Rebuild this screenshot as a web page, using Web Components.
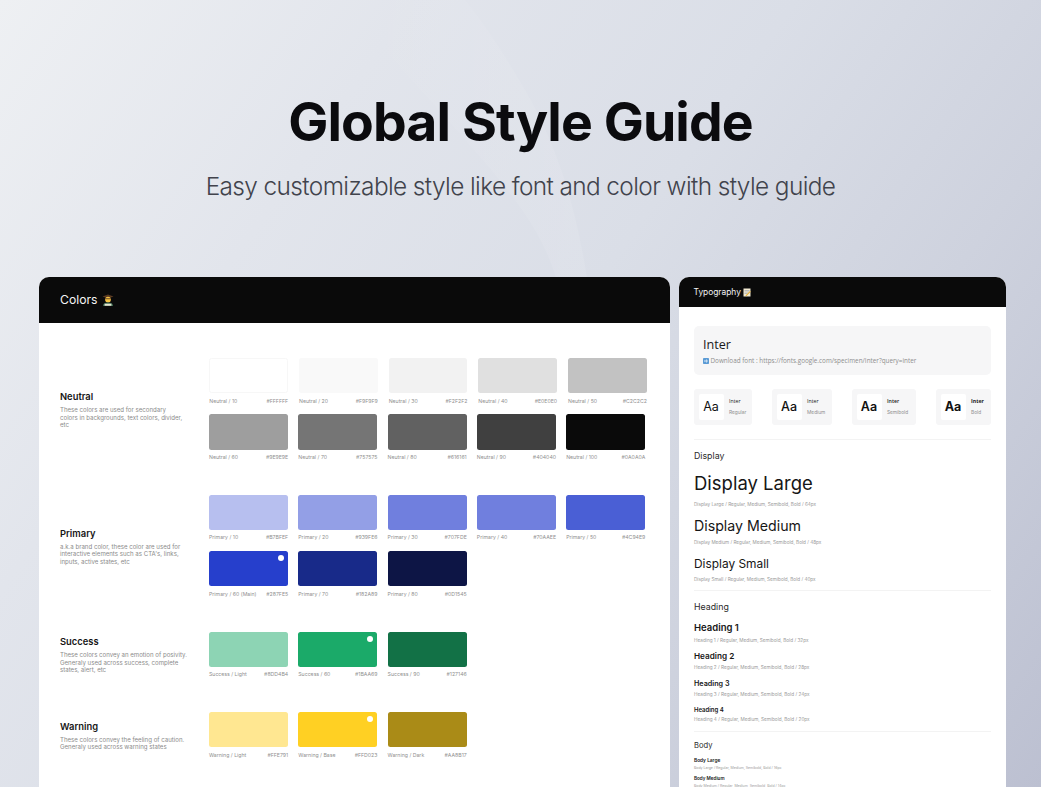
<!DOCTYPE html>
<html lang="en">
<head>
<meta charset="utf-8">
<title>Global Style Guide</title>
<style>
html,body{margin:0;padding:0;height:100%;overflow:hidden}
body{font-family:Inter,"Liberation Sans",sans-serif}
</style>
</head>
<body>
<template id="t-page">
<style>
:host{display:block;position:relative;width:1041px;height:787px;overflow:hidden;
background:linear-gradient(125deg,#eef0f3 0%,#e2e5ec 26%,#dadee7 50%,#ced2de 72%,#bcc0d1 100%)}
svg.bg{position:absolute;inset:0;width:100%;height:100%;pointer-events:none}
.wrap{position:relative;display:flex;flex-direction:column}
.cards{display:flex;gap:9px;padding-left:39px;align-items:flex-start}
</style>
<svg class="bg" viewBox="0 0 1041 787" aria-hidden="true">
<defs><linearGradient id="sw" x1="0" y1="0" x2="1" y2="0"><stop offset="0" stop-color="#fff" stop-opacity="0"/><stop offset="1" stop-color="#fff" stop-opacity=".09"/></linearGradient></defs>
<path d="M340 0C400 70 470 140 515 200C545 240 555 270 562 300L590 300C580 220 560 150 525 90C505 55 485 25 465 0Z" fill="url(#sw)"/>
</svg>
<div class="wrap"><slot name="hero"></slot><div class="cards"><slot></slot></div></div>
</template>

<template id="t-hero">
<style>
:host{display:block;height:277px;box-sizing:border-box;padding-top:90px;text-align:center;font-family:Inter,sans-serif}
h1{margin:0;font-size:53.5px;line-height:64px;font-weight:700;letter-spacing:-.9px;color:#0b0b0e}
p{margin:17px 0 0;font-size:24.4px;line-height:30px;font-weight:300;letter-spacing:-.6px;color:#41434c}
</style>
<h1><slot name="title"></slot></h1><p><slot name="sub"></slot></p>
</template>

<template id="t-card">
<style>
:host{display:block;width:var(--w);height:530px;background:#fff;border-radius:10px 10px 0 0;overflow:hidden;flex:none}
header{display:flex;align-items:center;gap:var(--hgap,3px);height:var(--hh);box-sizing:border-box;padding-left:var(--hp);padding-bottom:var(--hb,0);background:#0a0a0a;color:#f5f5f5;font-size:var(--hf);font-weight:400}
</style>
<header><slot name="head"></slot></header><slot></slot>
</template>

<template id="t-group">
<style>
:host{display:grid;grid-template-columns:149px 1fr;margin-bottom:24.3px;font-family:Inter,sans-serif}
.txt{align-self:center;padding-bottom:9px}
h3{margin:0 0 3px;font-size:9.4px;line-height:12px;font-weight:600;color:#161616}
p{margin:0;font-size:6.1px;line-height:7.5px;color:#8b8b8b;white-space:pre-line}
.rows{display:flex;flex-direction:column}
</style>
<div class="txt"><h3><slot name="title"></slot></h3><p><slot name="desc"></slot></p></div>
<div class="rows"><slot></slot></div>
</template>

<template id="t-row">
<style>:host{display:flex;gap:var(--g,10.1px);margin-left:var(--ml,0);height:56.2px}</style><slot></slot>
</template>

<template id="t-swatch">
<style>
:host{display:block;width:var(--sw,79.2px);flex:none;font-family:Inter,sans-serif}
.box{position:relative;height:35.2px;border-radius:2.5px;box-sizing:border-box}
.dot{position:absolute;top:4px;right:4.5px;width:6px;height:6px;border-radius:50%;background:#fff;display:none}
:host([main]) .dot{display:block}
.cap{display:flex;justify-content:space-between;margin-top:4.3px;font-size:5.2px;line-height:7px;color:#8f8f8f;white-space:nowrap}
</style>
<div class="box"><span class="dot"></span></div>
<div class="cap"><span class="n"></span><span class="h"></span></div>
</template>

<template id="t-weight">
<style>
:host{display:flex;align-items:center;height:36px;box-sizing:border-box;padding-left:4.5px;width:var(--w);background:#f6f6f7;border-radius:3px;font-family:Inter,sans-serif;flex:none}
.aa{display:flex;align-items:center;justify-content:center;width:25px;height:26px;background:#fff;border-radius:2px;font-size:12.5px;color:#111;font-weight:var(--fw)}
.t{margin-left:5.5px;display:flex;flex-direction:column;gap:5.4px}
b{font-size:5.2px;line-height:6px;font-weight:var(--fw);color:#222;font-family:"Open Sans",Inter,sans-serif}
i{font-style:normal;font-size:4.8px;line-height:5px;color:#8f8f8f}
</style>
<div class="aa">Aa</div><div class="t"><b>Inter</b><i class="s"></i></div>
</template>

<template id="t-spec">
<style>
:host{display:block;margin-top:var(--mt,0);font-family:Inter,sans-serif}
div{font-size:var(--fs);line-height:var(--lh);font-weight:var(--fw,400);color:#161616;white-space:nowrap}
p{margin:var(--sg,0) 0 0;font-size:var(--ss,4.66px);line-height:6px;color:#9a9a9a;white-space:nowrap}
</style>
<div><slot name="name"></slot></div><p><slot name="meta"></slot></p>
</template>

<template id="t-label">
<style>:host{display:block;font-family:Inter,sans-serif;font-size:var(--ls,8.8px);line-height:12px;color:#2a2a2a;margin-top:var(--mt,0)}</style><slot></slot>
</template>

<template id="t-rule">
<style>:host{display:block;height:1px;background:#f3f3f3;margin-top:var(--mt,0)}</style>
</template>

<template id="t-font">
<style>
:host{display:block;height:49px;box-sizing:border-box;margin-top:18.5px;padding:11px 9px;background:#f6f6f7;border-radius:5px}
h2{margin:0;font:500 12.6px/16px "Open Sans",Inter,sans-serif;color:#1a1a1a}
p{display:flex;align-items:center;gap:1.5px;margin:3.5px 0 0;font:400 6.35px/9px "Open Sans",Inter,sans-serif;color:#8e8e8e;white-space:nowrap}
</style>
<h2><slot name="name"></slot></h2><p><slot name="link"></slot></p>
</template>

<style>
style-card{font-family:Inter,sans-serif}
</style>

<style-page>
  <style-hero slot="hero">
    <span slot="title">Global Style Guide</span>
    <span slot="sub">Easy customizable style like font and color with style guide</span>
  </style-hero>

  <style-card style="--w:631px;--hh:46px;--hp:21px;--hf:12.2px;--hgap:3px;--hb:1px">
    <span slot="head">Colors</span>
    <svg slot="head" width="14" height="14" viewBox="0 0 14 14" aria-hidden="true"><path d="M1.5 3.6 7 1.6l5.5 2L7 5.6z" fill="#5a3a22"/><circle cx="7" cy="6.6" r="2.9" fill="#f6c343"/><path d="M4 5.3h6v1H4z" fill="#6d4a26"/><path d="M2 13c0-2.5 2-3.4 5-3.4s5 .9 5 3.4z" fill="#3d6b52"/><path d="M3.6 10.8h6.8v2H3.6z" fill="#e8e4d2"/></svg>
    <div id="colors" style="box-sizing:border-box;padding:35.2px 0 0 21px"></div>
  </style-card>

  <style-card style="--w:327px;--hh:30px;--hp:14.5px;--hf:8.4px;--hgap:2px">
    <span slot="head">Typography</span>
    <svg slot="head" width="8" height="9" viewBox="0 0 8 9" aria-hidden="true"><rect x=".5" y=".5" width="7" height="8" fill="#f2ead2"/><path d="M1.5 2.5h5M1.5 4h5M1.5 5.5h3" stroke="#9aa0a8" stroke-width=".6"/><path d="M2.5 7.5 7 3l.8.8L3.3 8.3z" fill="#e8b33c"/></svg>
    <div style="padding:0 15px">
      <style-font>
        <span slot="name">Inter</span>
        <svg slot="link" width="6" height="6" viewBox="0 0 6 6" aria-hidden="true"><rect width="6" height="6" rx=".8" fill="#5b9bd5"/><path d="M1 3h3M3 1.6 4.5 3 3 4.4" stroke="#fff" stroke-width=".8" fill="none"/></svg>
        <span slot="link">Download font : https://fonts.google.com/specimen/Inter?query=inter</span>
      </style-font>
      <div style="display:flex;justify-content:space-between;margin-top:14px">
        <style-weight label="Regular" style="--w:58px;--fw:400"></style-weight>
        <style-weight label="Medium" style="--w:60px;--fw:500"></style-weight>
        <style-weight label="Semibold" style="--w:64px;--fw:600"></style-weight>
        <style-weight label="Bold" style="--w:55px;--fw:700"></style-weight>
      </div>
      <style-rule style="--mt:14.5px"></style-rule>

      <style-label style="--mt:9.5px">Display</style-label>
      <style-spec style="--mt:9.5px;--fs:18.5px;--lh:24px;--sg:6px;--fw:400"><span slot="name">Display Large</span><span slot="meta">Display Large / Regular, Medium, Semibold, Bold / 64px</span></style-spec>
      <style-spec style="--mt:9px;--fs:14.2px;--lh:20px;--sg:3px;--fw:400"><span slot="name">Display Medium</span><span slot="meta">Display Medium / Regular, Medium, Semibold, Bold / 48px</span></style-spec>
      <style-spec style="--mt:11px;--fs:11.9px;--lh:16px;--sg:3.5px;--fw:400"><span slot="name">Display Small</span><span slot="meta">Display Small / Regular, Medium, Semibold, Bold / 40px</span></style-spec>
      <style-rule style="--mt:8px"></style-rule>

      <style-label style="--mt:10.5px">Heading</style-label>
      <style-spec style="--mt:9px;--fs:9.5px;--lh:12px;--sg:3px;--fw:600;--ss:4.7px"><span slot="name">Heading 1</span><span slot="meta">Heading 1 / Regular, Medium, Semibold, Bold / 32px</span></style-spec>
      <style-spec style="--mt:7.5px;--fs:8.2px;--lh:11px;--sg:2.5px;--fw:600;--ss:4.7px"><span slot="name">Heading 2</span><span slot="meta">Heading 2 / Regular, Medium, Semibold, Bold / 28px</span></style-spec>
      <style-spec style="--mt:9px;--fs:7.2px;--lh:10px;--sg:2px;--fw:600;--ss:4.7px"><span slot="name">Heading 3</span><span slot="meta">Heading 3 / Regular, Medium, Semibold, Bold / 24px</span></style-spec>
      <style-spec style="--mt:7.5px;--fs:6px;--lh:9px;--sg:2px;--fw:600;--ss:4.7px"><span slot="name">Heading 4</span><span slot="meta">Heading 4 / Regular, Medium, Semibold, Bold / 20px</span></style-spec>
      <style-rule style="--mt:9.5px"></style-rule>

      <style-label style="--mt:8px;--ls:7.6px">Body</style-label>
      <style-spec style="--mt:5px;--fs:4.8px;--lh:6px;--sg:2px;--fw:600;--ss:3.5px"><span slot="name">Body Large</span><span slot="meta">Body Large / Regular, Medium, Semibold, Bold / 16px</span></style-spec>
      <style-spec style="--mt:4.5px;--fs:4.6px;--lh:6px;--sg:1.5px;--fw:600;--ss:3.5px"><span slot="name">Body Medium</span><span slot="meta">Body Medium / Regular, Medium, Semibold, Bold / 14px</span></style-spec>
    </div>
  </style-card>
</style-page>

<script>
function simple(tag,tpl,extra){
  customElements.define(tag,class extends HTMLElement{
    constructor(){super();this.attachShadow({mode:'open'}).appendChild(document.getElementById(tpl).content.cloneNode(true));}
    connectedCallback(){if(extra)extra(this);}
  });
}
simple('style-page','t-page');
simple('style-hero','t-hero');
simple('style-card','t-card');
simple('color-group','t-group');
simple('color-row','t-row');
simple('style-label','t-label');
simple('style-rule','t-rule');
simple('style-font','t-font');
simple('style-spec','t-spec');
simple('style-weight','t-weight',el=>{el.shadowRoot.querySelector('.s').textContent=el.getAttribute('label');});
simple('color-swatch','t-swatch',el=>{
  const s=el.shadowRoot;
  const box=s.querySelector('.box');
  box.style.background=el.getAttribute('fill');
  if(el.hasAttribute('outlined'))box.style.border='1px solid #f7f7f7';
  s.querySelector('.n').textContent=el.getAttribute('name');
  s.querySelector('.h').textContent=el.getAttribute('hex');
});
const data=[
 ['Neutral','These colors are used for secondary\ncolors in backgrounds, text colors, divider,\netc',[
  [['Neutral / 10','#FFFFFF','#FFFFFF',0,1],['Neutral / 20','#F9F9F9','#F9F9F9'],['Neutral / 30','#F2F2F2','#F2F2F2'],['Neutral / 40','#E0E0E0','#E0E0E0'],['Neutral / 50','#C2C2C2','#C2C2C2']],
  [['Neutral / 60','#9E9E9E','#9E9E9E'],['Neutral / 70','#757575','#757575'],['Neutral / 80','#616161','#616161'],['Neutral / 90','#404040','#404040'],['Neutral / 100','#0A0A0A','#0A0A0A']]]],
 ['Primary',"a.k.a brand color, these color are used for\ninteractive elements such as CTA's, links,\ninputs, active states, etc",[
  [['Primary / 10','#B7BFEF','#B7BFEF'],['Primary / 20','#939FE6','#939FE6'],['Primary / 30','#707FDE','#707FDE'],['Primary / 40','#707FDE','#70AAEE'],['Primary / 50','#4A5FD5','#4C94E9']],
  [['Primary / 60 (Main)','#263FCC','#287FE5',1],['Primary / 70','#182A89','#182A89'],['Primary / 80','#0D1545','#0D1545']]]],
 ['Success','These colors convey an emotion of posivity.\nGeneraly used across success, complete\nstates, alert, etc',[
  [['Success / Light','#8DD4B4','#8DD4B4'],['Success / 60','#1BAA69','#1BAA69',1],['Success / 90','#127146','#127146']]]],
 ['Warning','These colors convey the feeling of caution.\nGeneraly used across warning states',[
  [['Warning / Light','#FFE791','#FFE791'],['Warning / Base','#FFD023','#FFD023',1],['Warning / Dark','#AA8B17','#AA8B17']]]]
];
const root=document.getElementById('colors');
data.forEach(([title,desc,rows])=>{
  const g=document.createElement('color-group');
  const h=document.createElement('span');h.slot='title';h.textContent=title;
  const d=document.createElement('span');d.slot='desc';d.textContent=desc;
  g.append(h,d);
  rows.forEach((r,ri)=>{
    const row=document.createElement('color-row');
    if(title==='Neutral'&&ri===0)row.style.cssText='--g:10.9px;--ml:.3px;--sw:78.8px';
    r.forEach(([n,f,x,m,o])=>{
      const c=document.createElement('color-swatch');
      c.setAttribute('name',n);c.setAttribute('fill',f);c.setAttribute('hex',x);
      if(m)c.setAttribute('main','');
      if(o)c.setAttribute('outlined','');
      row.append(c);
    });
    g.append(row);
  });
  root.append(g);
});
</script>
</body>
</html>
